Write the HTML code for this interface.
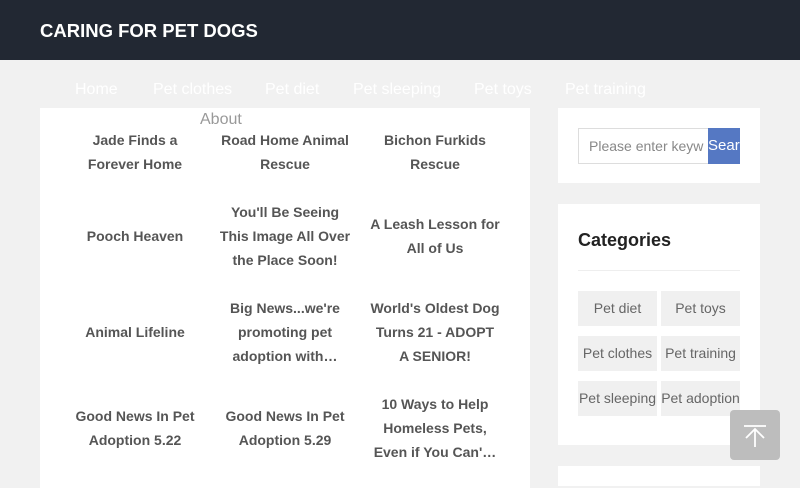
<!DOCTYPE html>
<html><head><style>
*{margin:0;padding:0;box-sizing:border-box}
body{width:800px;height:480px;overflow:hidden;background:#f1f1f1;font-family:"Liberation Sans",sans-serif;position:relative}
.hd{height:60px;background:#222833;color:#fff;font-weight:bold;font-size:18.5px;padding:20px 40px;letter-spacing:0px}
.nav{position:absolute;left:75px;top:81px;font-size:16px;color:#fff}
.nav span{position:absolute;white-space:nowrap}
.main{position:absolute;left:40px;top:108px;width:490px;height:380px;background:#fff}
.about{position:absolute;left:200px;top:111px;font-size:16px;color:#999}
.it{position:absolute;width:150px;text-align:center;font-size:14px;font-weight:bold;color:#555;line-height:24px;transform:translateY(-50%)}
.card{position:absolute;left:558px;width:202px;background:#fff}
.inp{position:absolute;left:20px;top:20px;width:131px;height:36px;border:1px solid #ddd;font-size:14px;color:#888;padding:9px 10px;white-space:nowrap;overflow:hidden}
.btn{position:absolute;left:150px;top:20px;width:32px;height:36px;background:#5578c3;color:#fff;font-size:15px;padding:9px 0;overflow:hidden;white-space:nowrap}
.tag{position:absolute;width:79px;height:35px;background:#f0f0f0;font-size:14px;color:#666;text-align:center;line-height:35px;white-space:nowrap}
.top{position:absolute;left:730px;top:410px;width:50px;height:50px;background:#bdbdbd;border-radius:4px}
</style></head><body>
<div class="hd">CARING FOR PET DOGS</div>
<div class="main"></div>
<div class="nav"><span style="left:0">Home</span><span style="left:78px">Pet clothes</span><span style="left:190px">Pet diet</span><span style="left:278px">Pet sleeping</span><span style="left:399px">Pet toys</span><span style="left:490px">Pet training</span></div>
<div class="about">About</div>
<div class="it" style="left:60px;top:152px">Jade Finds a<br>Forever Home</div>
<div class="it" style="left:210px;top:152px">Road Home Animal<br>Rescue</div>
<div class="it" style="left:360px;top:152px">Bichon Furkids<br>Rescue</div>
<div class="it" style="left:60px;top:236px">Pooch Heaven</div>
<div class="it" style="left:210px;top:236px">You'll Be Seeing<br>This Image All Over<br>the Place Soon!</div>
<div class="it" style="left:360px;top:236px">A Leash Lesson for<br>All of Us</div>
<div class="it" style="left:60px;top:332px">Animal Lifeline</div>
<div class="it" style="left:210px;top:332px">Big News...we're<br>promoting pet<br>adoption with…</div>
<div class="it" style="left:360px;top:332px">World's Oldest Dog<br>Turns 21 - ADOPT<br>A SENIOR!</div>
<div class="it" style="left:60px;top:428px">Good News In Pet<br>Adoption 5.22</div>
<div class="it" style="left:210px;top:428px">Good News In Pet<br>Adoption 5.29</div>
<div class="it" style="left:360px;top:428px">10 Ways to Help<br>Homeless Pets,<br>Even if You Can'…</div>
<div class="card" style="top:108px;height:75px"><div class="inp">Please enter keyw</div><div class="btn">Search</div></div>
<div class="card" style="top:204px;height:241px">
<div style="position:absolute;left:20px;top:26px;font-size:18px;font-weight:bold;color:#222">Categories</div>
<div style="position:absolute;left:20px;top:66px;width:162px;height:1px;background:#eee"></div>
<div class="tag" style="left:20px;top:87px">Pet diet</div><div class="tag" style="left:103px;top:87px">Pet toys</div>
<div class="tag" style="left:20px;top:132px">Pet clothes</div><div class="tag" style="left:103px;top:132px">Pet training</div>
<div class="tag" style="left:20px;top:177px">Pet sleeping</div><div class="tag" style="left:103px;top:177px">Pet adoption</div>
</div>
<div class="card" style="top:466px;height:20px"></div>
<div class="top"><svg width="50" height="50"><path d="M14 16H36M25 37V19M16 28L25 19L34 28" stroke="#fff" stroke-width="1.8" fill="none"/></svg></div>
</body></html>
